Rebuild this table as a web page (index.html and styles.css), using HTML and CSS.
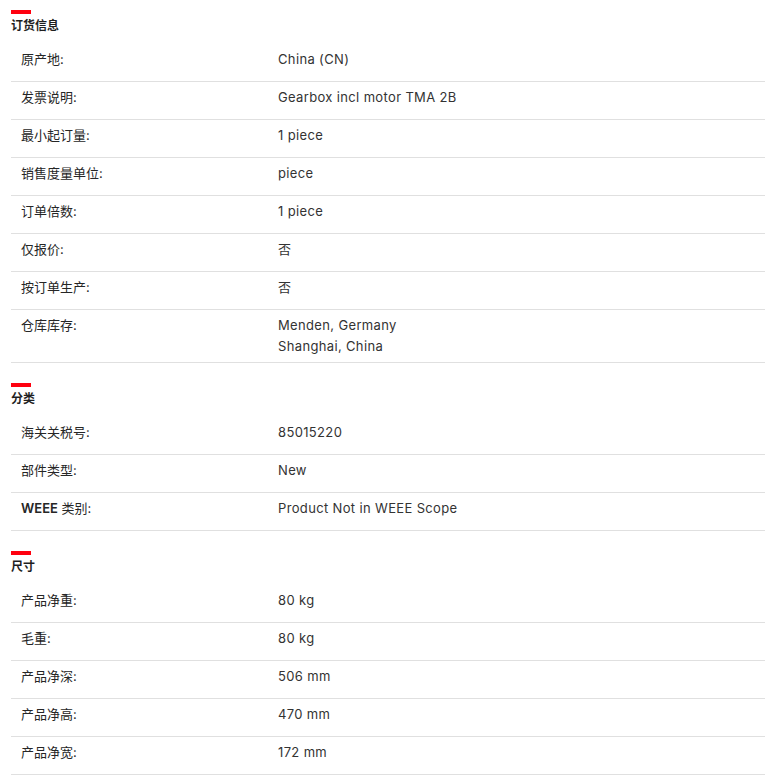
FILE: index.html
```html
<!DOCTYPE html>
<html lang="zh-CN">
<head>
    <meta charset="UTF-8">
    <meta name="viewport" content="width=device-width, initial-scale=1.0">
    <title>产品详情</title>
    <link rel="stylesheet" href="styles.css">
</head>
<body>
    <div class="specs">
        <!-- 订货信息 -->
        <div class="section first">
            <div class="section-bar"></div>
            <h2 class="section-title">订货信息</h2>
            <div class="row"><div class="label">原产地:</div><div class="value">China (CN)</div></div>
            <div class="row"><div class="label">发票说明:</div><div class="value">Gearbox incl motor TMA 2B</div></div>
            <div class="row"><div class="label">最小起订量:</div><div class="value">1 piece</div></div>
            <div class="row"><div class="label">销售度量单位:</div><div class="value">piece</div></div>
            <div class="row"><div class="label">订单倍数:</div><div class="value">1 piece</div></div>
            <div class="row"><div class="label">仅报价:</div><div class="value">否</div></div>
            <div class="row"><div class="label">按订单生产:</div><div class="value">否</div></div>
            <div class="row">
                <div class="label">仓库库存:</div>
                <div class="value">
                    <div>Menden, Germany</div>
                    <div>Shanghai, China</div>
                </div>
            </div>
        </div>

        <!-- 分类 -->
        <div class="section">
            <div class="section-bar"></div>
            <h2 class="section-title">分类</h2>
            <div class="row"><div class="label">海关关税号:</div><div class="value">85015220</div></div>
            <div class="row"><div class="label">部件类型:</div><div class="value">New</div></div>
            <div class="row"><div class="label"><span class="latin">WEEE</span> 类别:</div><div class="value">Product Not in WEEE Scope</div></div>
        </div>

        <!-- 尺寸 -->
        <div class="section">
            <div class="section-bar"></div>
            <h2 class="section-title">尺寸</h2>
            <div class="row"><div class="label">产品净重:</div><div class="value">80 kg</div></div>
            <div class="row"><div class="label">毛重:</div><div class="value">80 kg</div></div>
            <div class="row"><div class="label">产品净深:</div><div class="value">506 mm</div></div>
            <div class="row"><div class="label">产品净高:</div><div class="value">470 mm</div></div>
            <div class="row"><div class="label">产品净宽:</div><div class="value">172 mm</div></div>
        </div>
    </div>
</body>
</html>
```

FILE: styles.css
```css
* {
    margin: 0;
    padding: 0;
    box-sizing: border-box;
}

body {
    font-family: Inter, "Noto Sans CJK SC", sans-serif;
    font-size: 13px;
    color: #333;
    background: white;
}

.specs {
    padding-left: 11px;
}

.section {
    padding-top: 20px;
}

.section.first {
    padding-top: 10px;
}

.section-bar {
    width: 20px;
    height: 4px;
    background: #ff000f;
}

.section-title {
    font-size: 12px;
    font-weight: bold;
    line-height: 24px;
    color: #1f1f1f;
    margin-bottom: 6px;
}

.row {
    display: grid;
    grid-template-columns: 257px 1fr;
    min-height: 38px;
    padding: 5px 10px;
    line-height: 21px;
    border-bottom: 1px solid #e0e0e0;
}

.label {
    color: #262626;
}

.label .latin {
    font-weight: 600;
}

.value {
    color: #333;
    letter-spacing: 0.35px;
}
```
